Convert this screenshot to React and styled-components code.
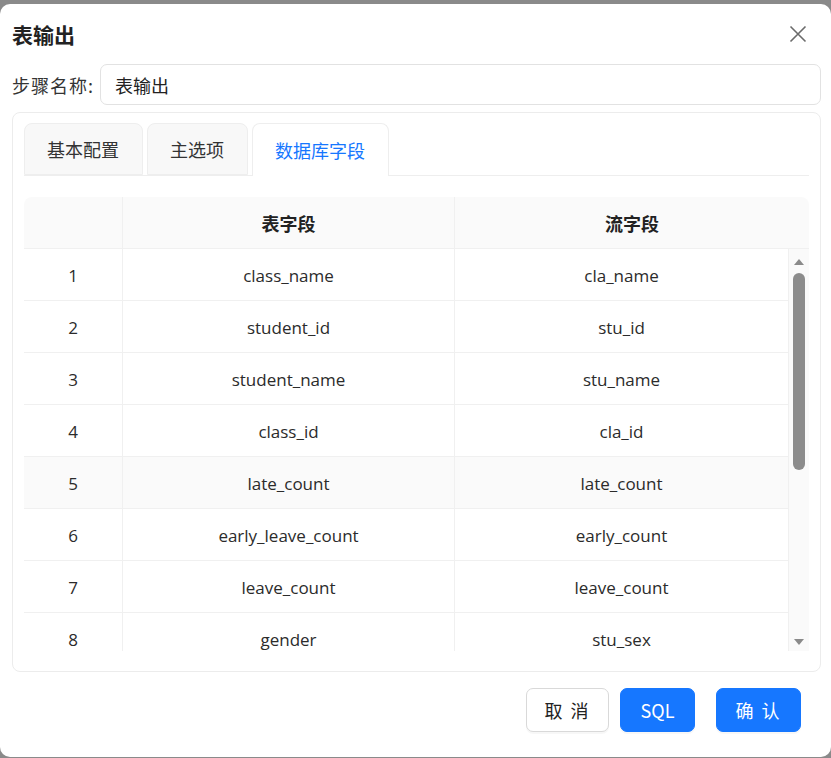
import React from "react";
import styled, { createGlobalStyle } from "styled-components";

const rows = [
  ["class_name", "cla_name"],
  ["student_id", "stu_id"],
  ["student_name", "stu_name"],
  ["class_id", "cla_id"],
  ["late_count", "late_count"],
  ["early_leave_count", "early_count"],
  ["leave_count", "leave_count"],
  ["gender", "stu_sex"],
];

const tabs = ["基本配置", "主选项", "数据库字段"];

function CloseIcon() {
  return (
    <svg width="18" height="18" viewBox="0 0 18 18">
      <path d="M1.5 1.5 L16.5 16.5 M16.5 1.5 L1.5 16.5" stroke="#6b6b6b" strokeWidth="1.6" fill="none" />
    </svg>
  );
}

export default function App() {
  return (
    <>
      <GlobalStyle />
      <Backdrop>
        <Modal>
          <Header>
            <Title>表输出</Title>
            <CloseButton>
              <CloseIcon />
            </CloseButton>
          </Header>

          <FieldRow>
            <FieldLabel>步骤名称:</FieldLabel>
            <TextInput defaultValue="表输出" />
          </FieldRow>

          <Card>
            <TabBar>
              {tabs.map((t, i) => (
                <Tab key={t} $active={i === 2}>
                  {t}
                </Tab>
              ))}
            </TabBar>

            <Table>
              <HeadRow>
                <HeadCell />
                <HeadCell>表字段</HeadCell>
                <HeadCell $last>流字段</HeadCell>
              </HeadRow>
              <BodyWrap>
                <Body>
                  {rows.map((r, i) => (
                    <Row key={i} $hover={i === 4}>
                      <Cell>{i + 1}</Cell>
                      <Cell>{r[0]}</Cell>
                      <Cell>{r[1]}</Cell>
                    </Row>
                  ))}
                </Body>
                <ScrollTrack>
                  <Arrow $up />
                  <Thumb />
                  <Spacer />
                  <Arrow />
                </ScrollTrack>
              </BodyWrap>
            </Table>
          </Card>

          <Footer>
            <Button $width="83px" $spaced>取 消</Button>
            <Button $primary $width="75px">SQL</Button>
            <Button $primary $width="85px" $spaced $gap="21px">确 认</Button>
          </Footer>
        </Modal>
      </Backdrop>
    </>
  );
}

const GlobalStyle = createGlobalStyle`
  html, body {
    margin: 0;
    padding: 0;
    background: #8a8a8a;
    font-family: "Noto Sans CJK SC", "Noto Sans", sans-serif;
  }
  * { box-sizing: border-box; }
`;

const Backdrop = styled.div`
  width: 831px;
  height: 758px;
  padding-top: 4px;
  overflow: hidden;
`;

const Modal = styled.div`
  width: 831px;
  height: 753px;
  background: #fff;
  border-radius: 10px;
  padding: 0 10px 0 12px;
  display: flex;
  flex-direction: column;
`;

const Header = styled.div`
  height: 60px;
  display: flex;
  align-items: center;
  justify-content: space-between;
  padding-right: 14px;
`;

const Title = styled.div`
  font-size: 21px;
  font-weight: 700;
  color: #222;
`;

const CloseButton = styled.div`
  width: 18px;
  height: 18px;
  display: flex;
`;

const FieldRow = styled.div`
  display: flex;
  align-items: center;
  gap: 6px;
  margin-bottom: 7px;
`;

const FieldLabel = styled.label`
  font-size: 18px;
  color: #333;
  letter-spacing: 1px;
`;

const TextInput = styled.input`
  flex: 1;
  height: 41px;
  border: 1px solid #e2e2e2;
  border-radius: 7px;
  padding: 0 14px;
  font-size: 18px;
  font-family: "Noto Sans CJK SC", "Noto Sans", sans-serif;
  color: #222;
  outline: none;
`;

const Card = styled.div`
  height: 560px;
  border: 1px solid #ececec;
  border-radius: 8px;
  padding: 10px 11px 0 11px;
  display: flex;
  flex-direction: column;
`;

const TabBar = styled.div`
  display: flex;
  gap: 4px;
  height: 53px;
  border-bottom: 1px solid #eeeeee;
  margin-bottom: 21px;
`;

const Tab = styled.div`
  height: ${(p) => (p.$active ? "53px" : "52px")};
  padding: 0 23px 0 22px;
  display: flex;
  align-items: center;
  font-size: 18px;
  color: ${(p) => (p.$active ? "#1677ff" : "#333")};
  background: ${(p) => (p.$active ? "#fff" : "#f8f8f8")};
  border: 1px solid #eeeeee;
  border-bottom: ${(p) => (p.$active ? "none" : "1px solid #eeeeee")};
  border-radius: 8px 8px 0 0;
`;

const Table = styled.div`
  width: 785px;
  display: flex;
  flex-direction: column;
`;

const HeadRow = styled.div`
  display: grid;
  grid-template-columns: 99px 332px 1fr;
  height: 52px;
  background: #fafafa;
  border-radius: 8px 8px 0 0;
  border-bottom: 1px solid #f0f0f0;
`;

const HeadCell = styled.div`
  display: flex;
  align-items: center;
  justify-content: center;
  font-size: 18px;
  font-weight: 700;
  color: #222;
  border-right: ${(p) => (p.$last ? "none" : "1px solid #f0f0f0")};
`;

const BodyWrap = styled.div`
  display: flex;
  height: 402px;
  overflow: hidden;
`;

const Body = styled.div`
  flex: 1;
  display: flex;
  flex-direction: column;
`;

const Row = styled.div`
  display: grid;
  grid-template-columns: 99px 332px 1fr;
  height: 52px;
  flex-shrink: 0;
  background: ${(p) => (p.$hover ? "#fafafa" : "#fff")};
  border-bottom: 1px solid #f0f0f0;
`;

const Cell = styled.div`
  display: flex;
  align-items: center;
  justify-content: center;
  padding-top: 2px;
  font-family: "Open Sans", "Noto Sans CJK SC", sans-serif;
  font-size: 17px;
  color: #2b2b2b;
  border-right: 1px solid #f0f0f0;
`;

const ScrollTrack = styled.div`
  width: 20px;
  display: flex;
  flex-direction: column;
  align-items: center;
  background: #fafafa;
  padding: 10px 0 6px;
`;

const Arrow = styled.div`
  width: 0;
  height: 0;
  border-left: 5px solid transparent;
  border-right: 5px solid transparent;
  ${(p) =>
    p.$up
      ? "border-bottom: 6px solid #8a8a8a;"
      : "border-top: 6px solid #8a8a8a;"}
`;

const Thumb = styled.div`
  width: 12px;
  height: 197px;
  margin-top: 8px;
  background: #8c8c8c;
  border-radius: 6px;
`;

const Spacer = styled.div`
  flex: 1;
`;

const Footer = styled.div`
  display: flex;
  justify-content: flex-end;
  gap: 11px;
  padding: 16px 20px 0 0;
`;

const Button = styled.button`
  height: 44px;
  width: ${(p) => p.$width};
  padding: 0;
  margin-left: ${(p) => (p.$gap ? `calc(${p.$gap} - 11px)` : "0")};
  border-radius: 7px;
  font-family: "Noto Sans CJK SC", "Noto Sans", sans-serif;
  font-size: 18px;
  letter-spacing: ${(p) => (p.$spaced ? "2px" : "0")};
  cursor: pointer;
  border: 1px solid ${(p) => (p.$primary ? "#1677ff" : "#d9d9d9")};
  background: ${(p) => (p.$primary ? "#1677ff" : "#fff")};
  color: ${(p) => (p.$primary ? "#fff" : "#222")};
  box-shadow: 0 2px 0 rgba(0, 0, 0, 0.03);
`;
